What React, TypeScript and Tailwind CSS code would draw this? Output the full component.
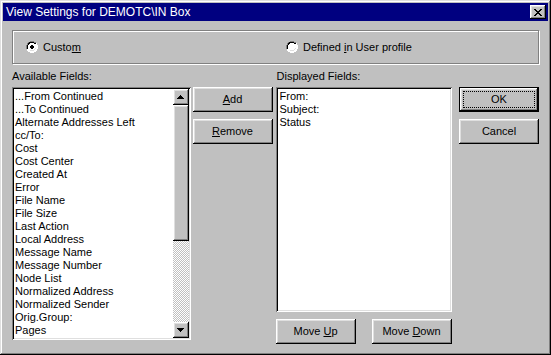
const available = [
  "...From Continued",
  "...To Continued",
  "Alternate Addresses Left",
  "cc/To:",
  "Cost",
  "Cost Center",
  "Created At",
  "Error",
  "File Name",
  "File Size",
  "Last Action",
  "Local Address",
  "Message Name",
  "Message Number",
  "Node List",
  "Normalized Address",
  "Normalized Sender",
  "Orig.Group:",
  "Pages",
];

const displayed = ["From:", "Subject:", "Status"];

const raised =
  "bg-[#c0c0c0] shadow-[inset_-1px_-1px_#000,inset_1px_1px_#fff,inset_-2px_-2px_#808080,inset_2px_2px_#dfdfdf]";
const sunken =
  "bg-white shadow-[inset_1px_1px_#808080,inset_-1px_-1px_#fff,inset_2px_2px_#000,inset_-2px_-2px_#dfdfdf]";

function Radio({ checked }: { checked?: boolean }) {
  return (
    <svg width="12" height="12" viewBox="0 0 12 12" className="shrink-0">
      <path d="M4 0h4v1h2v1h1v2h1v4h-1v2h-1v1h-2v1h-4v-1h-2v-1h-1v-2h-1v-4h1v-2h1v-1h2z" fill="#fff" />
      <path d="M4 0h4v1h2v1h-2v-1h-4v1h-2v2h-1v4h-1v-4h1v-2h1v-1h2z" fill="#808080" />
      <path d="M4 1h4v1h2v1h-2v-1h-4v1h-1v1h-1v4h-1v-4h1v-2h1v-1h1z" fill="#000" />
      <path d="M10 8v2h-2v1h-4v-1h-2v1h2v1h4v-1h2v-1h1v-2z" fill="#fff" />
      <path d="M10 3v1h0v4h-1v1h-1v1h-4v-1h4v-1h1v-1h1v-4z" fill="#dfdfdf" />
      {checked && <path d="M5 4h2v1h1v2h-1v1h-2v-1h-1v-2h1z" fill="#000" />}
    </svg>
  );
}

function Arrow({ down }: { down?: boolean }) {
  return (
    <svg width="7" height="4" viewBox="0 0 7 4">
      {down ? (
        <path d="M0 0h7v1h-1v1h-1v1h-1v1h-1v-1h-1v-1h-1v-1h-1z" fill="#000" />
      ) : (
        <path d="M3 0h1v1h1v1h1v1h1v1h-7v-1h1v-1h1v-1h1z" fill="#000" />
      )}
    </svg>
  );
}

function Button({
  children,
  isDefault,
}: {
  children: React.ReactNode;
  isDefault?: boolean;
}) {
  if (isDefault) {
    return (
      <div className="h-[25px] w-[80px] border border-black">
        <div className={"h-full w-full p-[3px] " + raised}>
          <div className="flex h-full w-full items-center justify-center border border-dotted border-black">
            <span>{children}</span>
          </div>
        </div>
      </div>
    );
  }
  return (
    <div className={"flex h-[25px] w-[80px] items-center justify-center " + raised}>
      <span>{children}</span>
    </div>
  );
}

export default function App() {
  return (
    <div
      className="flex h-[355px] w-[551px] flex-col bg-[#c0c0c0] p-[3px] text-[11px] leading-[13px] text-black shadow-[inset_-1px_-1px_#000,inset_1px_1px_#dfdfdf,inset_-2px_-2px_#808080,inset_2px_2px_#fff]"
      style={{ fontFamily: '"Liberation Sans", Arial, sans-serif' }}
    >
      <div className="flex h-[18px] items-center justify-between bg-[#000080] pl-[3px] pr-[2px]">
        <span className="text-[12px] text-white">View Settings for DEMOTC\IN Box</span>
        <div className={"flex h-[14px] w-[16px] items-center justify-center " + raised}>
          <svg width="8" height="7" viewBox="0 0 8 7">
            <path d="M0 0h2v1h1v1h2v-1h1v-1h2v1h-1v1h-1v1h-1v1h1v1h1v1h1v1h-2v-1h-1v-1h-2v1h-1v1h-2v-1h1v-1h1v-1h1v-1h-1v-1h-1v-1h-1z" fill="#000" />
          </svg>
        </div>
      </div>

      <div className="flex flex-1 flex-col px-[9px] pt-[9px]">
        <div className="flex h-[34px] items-center border border-[#808080] shadow-[inset_1px_1px_#fff,1px_1px_#fff]">
          <div className="ml-[13px] flex w-[260px] items-center gap-[5px]">
            <Radio checked />
            <span>
              Custo<u>m</u>
            </span>
          </div>
          <div className="flex items-center gap-[5px]">
            <Radio />
            <span>
              Defined <u>i</u>n User profile
            </span>
          </div>
        </div>

        <div className="mt-[6px] flex">
          <div className="flex w-[179px] flex-col">
            <div className="mb-[4px] h-[13px]">Available Fields:</div>
            <div className={"flex h-[253px] p-[2px] " + sunken}>
              <div className="flex-1 overflow-hidden pl-[1px] pt-[1px]">
                {available.map((f) => (
                  <div key={f} className="h-[13px] whitespace-nowrap">
                    {f}
                  </div>
                ))}
              </div>
              <div className="flex w-[16px] flex-col">
                <div className={"flex h-[16px] items-center justify-center " + raised}>
                  <Arrow />
                </div>
                <div className={"h-[136px] " + raised} />
                <div className="flex-1 bg-[repeating-conic-gradient(#c0c0c0_0_25%,#fff_0_50%)] bg-[length:2px_2px]" />
                <div className={"flex h-[16px] items-center justify-center " + raised}>
                  <Arrow down />
                </div>
              </div>
            </div>
          </div>

          <div className="ml-[2px] flex w-[80px] flex-col gap-[7px] pt-[17px]">
            <Button>
              <u>A</u>dd
            </Button>
            <Button>
              <u>R</u>emove
            </Button>
          </div>

          <div className="ml-[3px] flex w-[177px] flex-col">
            <div className="mb-[4px] h-[13px] pl-[1px]">Displayed Fields:</div>
            <div className={"h-[225px] p-[2px] " + sunken}>
              <div className="pl-[2px] pt-[1px]">
                {displayed.map((f) => (
                  <div key={f} className="h-[13px]">
                    {f}
                  </div>
                ))}
              </div>
            </div>
            <div className="mt-[7px] flex gap-[16px]">
              <Button>
                Move <u>U</u>p
              </Button>
              <Button>
                Move <u>D</u>own
              </Button>
            </div>
          </div>

          <div className="ml-[7px] flex w-[80px] flex-col gap-[7px] pt-[17px]">
            <Button isDefault>OK</Button>
            <Button>Cancel</Button>
          </div>
        </div>
      </div>
    </div>
  );
}
